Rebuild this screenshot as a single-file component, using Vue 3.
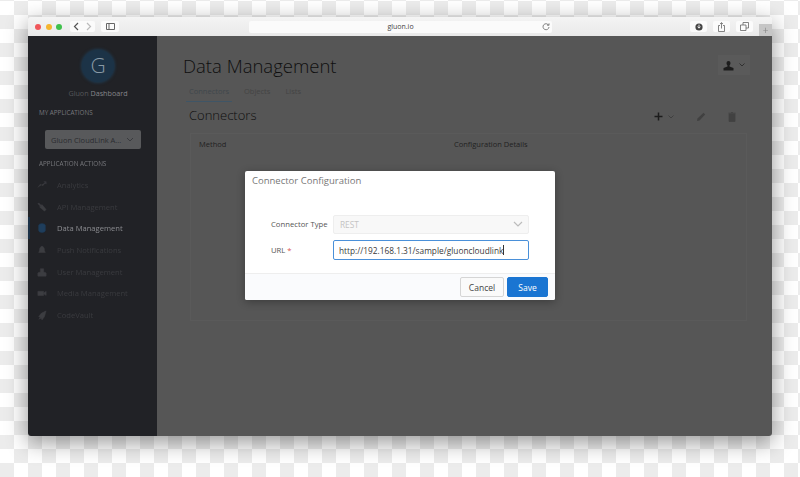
<script setup>
const navItems = [
  { label: 'Analytics', icon: 'M1 9l3-4 3 2 4-5M8 2h3v3' },
  { label: 'API Management', icon: 'M2 1l3 3 1-1 5 6-2 2-6-5 1-1-3-3z' },
  { label: 'Data Management', icon: 'M2 3c0-3 8-3 8 0v6c0 3-8 3-8 0z', active: true },
  { label: 'Push Notifications', icon: 'M6 1c1 0 1 1 1 1 2 1 2 3 2 5l1 2H2l1-2c0-2 0-4 2-5 0 0 0-1 1-1z' },
  { label: 'User Management', icon: 'M1 11V7l3-1V2h4v4l3 1v4z' },
  { label: 'Media Management', icon: 'M1 4h7v5H1zM8 6l3-2v5L8 7z' },
  { label: 'CodeVault', icon: 'M11 1L5 4 2 8l2 1-2 2 3-1 1 2 3-4z' }
]
</script>

<template>
  <div class="stage">
    <div class="window">
      <div class="toolbar">
        <div class="lights">
          <span class="dot red"></span>
          <span class="dot yellow"></span>
          <span class="dot green"></span>
        </div>
        <div class="tool-btn nav-btn">
          <svg width="6" height="9" viewBox="0 0 6 9"><path d="M5 1L1.500 4.500 5 8" fill="none" stroke="#555" stroke-width="1.200" /></svg>
          <svg width="6" height="9" viewBox="0 0 6 9"><path d="M1 1l3.500 3.500L1 8" fill="none" stroke="#bbb" stroke-width="1.200" /></svg>
        </div>
        <div class="tool-btn side-btn">
          <svg width="9" height="7" viewBox="0 0 9 7"><path d="M.5.5h8v6h-8zM3 .5v6" fill="none" stroke="#666" stroke-width="1" /></svg>
        </div>
        <div class="url-bar">
          <span class="url-text">gluon.io</span>
          <svg class="reload" width="8" height="8" viewBox="0 0 8 8"><path d="M6.600 2.200A3 3 0 1 0 7 4M5 2.200h2V.4" fill="none" stroke="#666" stroke-width=".8" /></svg>
        </div>
        <div class="right-tools">
          <div class="tool-btn small">
            <svg width="8" height="8" viewBox="0 0 8 8"><circle cx="4" cy="4" r="3.600" fill="#444" /><path d="M4 1.600v3M2.600 3.600L4 5.200l1.400-1.600" fill="none" stroke="#fff" stroke-width=".9" /></svg>
          </div>
          <div class="tool-btn small">
            <svg width="7" height="10" viewBox="0 0 7 10"><path d="M2 3.500H.5v6h6v-6H5M3.500 6.500V.8M2 2l1.500-1.300L5 2" fill="none" stroke="#666" stroke-width=".8" /></svg>
          </div>
          <div class="tool-btn small">
            <svg width="9" height="9" viewBox="0 0 9 9"><path d="M.5 3h5.500v5.500H.5zM3 3V.5h5.500V6H6" fill="none" stroke="#666" stroke-width=".8" /></svg>
          </div>
        </div>
        <div class="new-tab">+</div>
      </div>

      <div class="app">
        <aside class="sidebar">
          <div class="logo">G</div>
          <div class="brand">Gluon <b>Dashboard</b></div>
          <div class="side-head">MY APPLICATIONS</div>
          <div class="app-select">
            <span>Gluon CloudLink A...</span>
            <svg width="8" height="5" viewBox="0 0 8 5"><path d="M1 1l3 3 3-3" fill="none" stroke="#3a3b3f" stroke-width="1" /></svg>
          </div>
          <div class="side-head second">APPLICATION ACTIONS</div>
          <ul class="nav">
            <li v-for="item in navItems" :key="item.label" :class="{ active: item.active }">
              <svg width="10" height="10" viewBox="0 0 12 12">
                <path :d="item.icon" :fill="item.active ? '#1f3e5c' : '#3c3d41'" :stroke="item.active ? '#1f3e5c' : '#3c3d41'" stroke-width=".6" />
              </svg>
              <span>{{ item.label }}</span>
            </li>
          </ul>
        </aside>

        <main class="content">
          <div class="title-row">
            <h1>Data Management</h1>
            <div class="user-btn">
              <svg width="11" height="11" viewBox="0 0 11 11"><path d="M3.500 3a2 2 0 1 1 4 0c0 1.200-.5 2-1 2.500V6.500L10.500 8v2.500H.5V8l4-1.500V5.500c-.5-.5-1-1.300-1-2.500z" fill="#1c1c1c" /></svg>
              <svg width="6" height="4" viewBox="0 0 6 4"><path d="M.5.5L3 3 5.500.5" fill="none" stroke="#2b2b2b" stroke-width=".9" /></svg>
            </div>
          </div>
          <div class="tabs">
            <span class="tab current">Connectors</span>
            <span class="tab">Objects</span>
            <span class="tab">Lists</span>
          </div>
          <div class="section-row">
            <h2>Connectors</h2>
            <div class="actions">
              <div class="add-btn">
                <svg width="9" height="9" viewBox="0 0 9 9"><path d="M4.500.5v8M.5 4.500h8" stroke="#1c1c1c" stroke-width="1.500" /></svg>
                <svg width="6" height="4" viewBox="0 0 6 4"><path d="M.5.5L3 3 5.500.5" fill="none" stroke="#3c3c3c" stroke-width=".9" /></svg>
              </div>
              <svg width="10" height="10" viewBox="0 0 10 10"><path d="M1 9l.5-2.500L7.500.8 9.200 2.500 3.500 8.500z" fill="#414141" /></svg>
              <svg width="8" height="10" viewBox="0 0 8 10"><path d="M1 2h6v7.500H1zM.3 1.200h7.400M3 .5h2" fill="#414141" stroke="#414141" stroke-width=".8" /></svg>
            </div>
          </div>
          <div class="table-panel">
            <div class="table-head">
              <span class="col-method">Method</span>
              <span>Configuration Details</span>
            </div>
          </div>
          <div class="modal">
            <div class="modal-title">Connector Configuration</div>
            <div class="modal-body">
              <div class="field">
                <label>Connector Type</label>
                <div class="select-input">
                  <span>REST</span>
                  <svg width="10" height="6" viewBox="0 0 10 6"><path d="M1 1l4 4 4-4" fill="none" stroke="#bcbcbc" stroke-width="1.200" /></svg>
                </div>
              </div>
              <div class="field">
                <label>URL <em>*</em></label>
                <div class="text-input">http://192.168.1.31/sample/gluoncloudlink<i class="caret"></i></div>
              </div>
            </div>
            <div class="modal-foot">
              <button class="btn">Cancel</button>
              <button class="btn primary">Save</button>
            </div>
          </div>
        </main>
      </div>
    </div>
  </div>
</template>

<style>
body {
  margin: 0;
  overflow: hidden;
}
</style>

<style scoped>
.stage {
  width: 800px;
  height: 477px;
  box-sizing: border-box;
  padding: 17px 28px 41px;
  background: conic-gradient(#ececec 25%, #fff 0 50%, #ececec 0 75%, #fff 0) 0 1px / 28px 28px;
  font-family: "Open Sans", "Liberation Sans", sans-serif;
  filter: blur(0.5px);
  overflow: hidden;
}

.window {
  height: 100%;
  display: flex;
  flex-direction: column;
  box-shadow: 0 6px 22px rgba(0, 0, 0, 0.42);
  border-radius: 3px;
}

.toolbar {
  height: 19px;
  flex: none;
  display: flex;
  align-items: center;
  position: relative;
  background: linear-gradient(#f4f4f4, #e9e9e9);
  border-radius: 3px 3px 0 0;
}

.lights {
  display: flex;
  gap: 4.500px;
  margin-left: 7px;
}

.dot {
  width: 6px;
  height: 6px;
  border-radius: 50%;
}

.red { background: #f0565a; }
.yellow { background: #f5b52f; }
.green { background: #3fc14c; }

.tool-btn {
  height: 11px;
  display: flex;
  align-items: center;
  justify-content: center;
  background: #fbfbfb;
  border-radius: 2px;
}

.nav-btn {
  width: 25px;
  margin-left: 8px;
  gap: 7px;
}

.side-btn {
  width: 18px;
  margin-left: 6px;
}

.url-bar {
  width: 303px;
  height: 12px;
  margin-left: 130px;
  position: relative;
  display: flex;
  align-items: center;
  justify-content: center;
  background: #fbfbfb;
  border-radius: 2px;
}

.url-text {
  font-size: 7px;
  color: #444;
}

.reload {
  position: absolute;
  right: 2px;
  top: 2px;
}

.right-tools {
  display: flex;
  gap: 6px;
  margin-left: 138px;
}

.small {
  width: 17px;
}

.new-tab {
  position: absolute;
  right: 0;
  top: 7px;
  width: 13px;
  height: 12px;
  background: #c6c6c6;
  color: #8a8a8a;
  font-size: 10px;
  line-height: 12px;
  text-align: center;
}

.app {
  flex: 1;
  min-height: 0;
  display: flex;
  border-radius: 0 0 3px 3px;
  overflow: hidden;
}

.sidebar {
  width: 129px;
  flex: none;
  box-sizing: border-box;
  padding-top: 14px;
  background: #212226;
  color: #6b6c70;
}

.logo {
  width: 32px;
  height: 32px;
  margin-left: 54px;
  border-radius: 50%;
  background: #1c3347;
  box-shadow: 0 0 3px 1px #1f3a50;
  color: #8a9aa5;
  font-size: 21px;
  font-weight: 300;
  line-height: 31px;
  text-align: center;
}

.brand {
  margin-top: 6px;
  padding-left: 11px;
  font-size: 7.200px;
  line-height: 11px;
  color: #55565a;
  text-align: center;
}

.brand b {
  font-weight: 400;
  color: #85868a;
}

.side-head {
  margin: 9px 0 0 11px;
  font-size: 6.300px;
  line-height: 10px;
  color: #77787c;
}

.second {
  margin-top: 10px;
}

.app-select {
  width: 96px;
  height: 19px;
  margin: 12px 0 0 17px;
  box-sizing: border-box;
  padding: 0 7px 0 6px;
  display: flex;
  align-items: center;
  justify-content: space-between;
  background: #58595b;
  border-radius: 2px;
  font-size: 7.500px;
  color: #2b2c30;
  white-space: nowrap;
}

.nav {
  list-style: none;
  margin: 5px 0 0;
  padding: 0;
}

.nav li {
  height: 21.700px;
  box-sizing: border-box;
  padding-left: 9px;
  display: flex;
  align-items: center;
  gap: 10px;
  font-size: 7.600px;
  color: #3a3b3f;
  white-space: nowrap;
}

.nav li.active {
  color: #8b8c90;
  box-shadow: inset 2px 0 0 #1a3046;
}

.content {
  flex: 1;
  min-width: 0;
  position: relative;
  box-sizing: border-box;
  padding: 0 25px 0 26px;
  background: #565656;
}

.title-row {
  display: flex;
  justify-content: space-between;
  align-items: center;
  height: 24px;
  margin-top: 17px;
}

h1 {
  margin: 0;
  font-size: 18.500px;
  font-weight: 300;
  color: #0f0f0f;
}

.user-btn {
  width: 32px;
  height: 20px;
  margin-top: 0;
  margin-right: -3px;
  display: flex;
  align-items: center;
  justify-content: center;
  gap: 5px;
  background: #5a5a5a;
}

.tabs {
  display: flex;
  margin-top: 6px;
  margin-left: 3px;
  gap: 12px;
  height: 19px;
  box-sizing: border-box;
}

.tab {
  padding-top: 2px;
  font-size: 7.500px;
  line-height: 12px;
  color: #444;
}

.current {
  box-sizing: border-box;
  width: 46px;
  padding-left: 3px;
  height: 19px;
  color: #40474c;
  border-bottom: 1px solid #3f5566;
}

.tab + .tab + .tab {
  margin-left: 3px;
}

.section-row {
  display: flex;
  justify-content: space-between;
  align-items: center;
  height: 20px;
  margin-top: 3px;
  padding-left: 6px;
}

h2 {
  margin: 0;
  font-size: 13px;
  font-weight: 300;
  color: #0f0f0f;
}

.actions {
  display: flex;
  align-items: center;
  gap: 22px;
  margin-top: 3px;
  padding-right: 11px;
}

.add-btn {
  display: flex;
  align-items: center;
  gap: 5px;
}

.table-panel {
  height: 186px;
  margin: 8px 0 0 7px;
  border: 1px solid #5a5a5a;
}

.table-head {
  display: flex;
  padding: 5px 0 0 8px;
  font-size: 7.500px;
  line-height: 11px;
  font-weight: 500;
  color: #222;
}

.col-method {
  width: 255px;
}

.modal {
  position: absolute;
  left: 88px;
  top: 135px;
  width: 310px;
  height: 129px;
  box-sizing: border-box;
  display: flex;
  flex-direction: column;
  background: #fff;
  border-radius: 2px;
  box-shadow: 0 2px 8px rgba(0, 0, 0, 0.3);
}

.modal-title {
  padding: 3px 0 0 7px;
  font-size: 9.500px;
  line-height: 14px;
  color: #777;
}

.modal-body {
  flex: 1;
  padding-top: 26px;
}

.field {
  display: flex;
  align-items: center;
  height: 20px;
  margin-bottom: 6px;
}

.field label {
  width: 62px;
  margin-left: 26px;
  font-size: 7.700px;
  color: #555;
}

.field em {
  font-style: normal;
  color: #d9534f;
}

.select-input,
.text-input {
  width: 196px;
  box-sizing: border-box;
  display: flex;
  align-items: center;
  border-radius: 2px;
  font-size: 8.300px;
}

.select-input {
  height: 19px;
  justify-content: space-between;
  padding: 0 5px 0 6px;
  background: #f8f8f8;
  border: 1px solid #eee;
  color: #c4c4c4;
}

.text-input {
  height: 20px;
  padding: 0 5px;
  background: #fff;
  border: 1.500px solid #4a90d9;
  color: #3a3a3a;
}

.caret {
  width: 1px;
  height: 10px;
  background: #333;
}

.modal-foot {
  height: 26px;
  display: flex;
  justify-content: flex-end;
  align-items: center;
  gap: 3px;
  padding-right: 7px;
  background: #fafbfd;
  border-top: 1px solid #eee;
  border-radius: 0 0 2px 2px;
}

.btn {
  width: 44px;
  height: 20px;
  padding: 0;
  background: #fafafa;
  border: 1px solid #d5d5d5;
  border-radius: 2px;
  font-family: inherit;
  font-size: 8.500px;
  color: #444;
}

.primary {
  width: 41px;
  background: #1a75d2;
  border-color: #1a75d2;
  color: #fff;
}
</style>
